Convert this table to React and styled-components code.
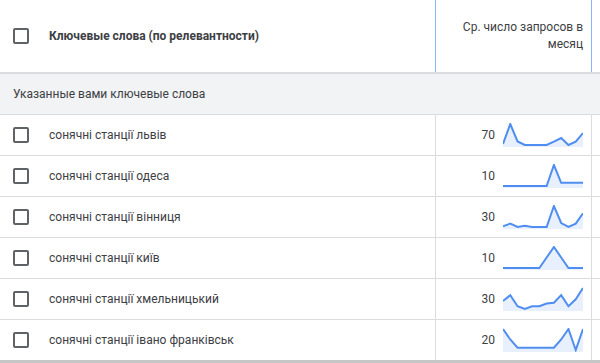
import React from "react";
import styled, { createGlobalStyle } from "styled-components";

const GlobalStyle = createGlobalStyle`
  html, body {
    margin: 0;
    padding: 0;
    background: #fff;
  }
  body {
    font-family: Roboto, "Noto Sans", Arial, sans-serif;
    color: #3c4043;
    -webkit-font-smoothing: antialiased;
  }
`;

const Table = styled.div`
  width: 600px;
  border-bottom: 3px solid #c6c6c6;
`;

const Row = styled.div`
  display: grid;
  grid-template-columns: 435px 156px 1fr;
  height: ${(p) => p.$height || 40}px;
  background: ${(p) => p.$bg || "#fff"};
  border-bottom: ${(p) => (p.$last ? "none" : `${p.$line || 1}px solid #dadce0`)};
`;

const Cell = styled.div`
  display: flex;
  align-items: center;
  border-left: ${(p) => (p.$divider ? `1px solid ${p.$divider}` : "none")};
  justify-content: ${(p) => (p.$end ? "flex-end" : "flex-start")};
  padding: ${(p) => p.$pad || "0"};
  gap: ${(p) => p.$gap || 0}px;
  min-width: 0;
`;

const Checkbox = styled.span`
  box-sizing: border-box;
  width: 16px;
  height: 16px;
  border: 2px solid #5f6368;
  border-radius: 2px;
  margin: 0 20px 0 13px;
  flex-shrink: 0;
`;

const HeadTitle = styled.span`
  font-size: 12px;
  font-weight: 700;
  color: #3c4043;
`;

const HeadMetric = styled.span`
  font-size: 12px;
  line-height: 17px;
  text-align: right;
  color: #3c4043;
`;

const GroupLabel = styled.span`
  font-size: 12px;
  padding-left: 13px;
  color: #3c4043;
`;

const Keyword = styled.span`
  font-size: 12px;
  color: #3c4043;
  white-space: nowrap;
`;

const Volume = styled.span`
  font-size: 12px;
  color: #3c4043;
`;

const Spark = styled.svg`
  display: block;
  width: 80px;
  height: 24px;
  flex-shrink: 0;
`;

const keywords = [
  { text: "сонячні станції львів", volume: 70, trend: [0.05, 1, 0.17, 0, 0, 0, 0, 0.16, 0.33, 0, 0.16, 0.57] },
  { text: "сонячні станції одеса", volume: 10, trend: [0, 0, 0, 0, 0, 0, 0, 1, 0.15, 0.15, 0.15, 0.15] },
  { text: "сонячні станції вінниця", volume: 30, trend: [0.03, 0.16, 0, 0.06, 0, 0, 0, 1, 0.19, 0, 0.16, 0.65] },
  { text: "сонячні станції київ", volume: 10, trend: [0, 0, 0, 0, 0, 0, 0.5, 1, 0.5, 0, 0, 0] },
  { text: "сонячні станції хмельницький", volume: 30, trend: [0.38, 0.66, 0.13, 0, 0.13, 0.13, 0.26, 0.3, 0.66, 0.13, 0.46, 1] },
  { text: "сонячні станції івано франківськ", volume: 20, trend: [1, 0.5, 0.11, 0.11, 0.11, 0.11, 0.11, 0.11, 0.5, 1, 0, 1] },
];

// 12-month trend line with a pale area under it
const Sparkline = ({ values }) => {
  const w = 80;
  const top = 1;
  const bottom = 22;
  const step = w / (values.length - 1);
  const pts = values.map((v, i) => [i * step, bottom - v * (bottom - top)]);
  const line = pts.map(([x, y]) => `${x.toFixed(2)},${y.toFixed(2)}`).join(" ");
  const area = `0,24 ${line} ${w},24`;
  return (
    <Spark viewBox="0 0 80 24">
      <polygon points={area} fill="#e8f0fe" />
      <polyline points={line} fill="none" stroke="#4f8ef0" strokeWidth="2" strokeLinejoin="miter" />
    </Spark>
  );
};

export default function App() {
  return (
    <>
      <GlobalStyle />
      <Table>
        <Row $height={72} $line={2}>
          <Cell>
            <Checkbox />
            <HeadTitle>Ключевые слова (по релевантности)</HeadTitle>
          </Cell>
          <Cell $divider="#8ab4f8" $end $pad="0 8px 0 0">
            <HeadMetric>
              Ср. число запросов в
              <br />
              месяц
            </HeadMetric>
          </Cell>
          <Cell $divider="#8ab4f8" />
        </Row>
        <Row $bg="#f1f3f4">
          <Cell>
            <GroupLabel>Указанные вами ключевые слова</GroupLabel>
          </Cell>
          <Cell />
          <Cell />
        </Row>
        {keywords.map((k, i) => (
          <Row key={k.text} $last={i === keywords.length - 1}>
            <Cell>
              <Checkbox />
              <Keyword>{k.text}</Keyword>
            </Cell>
            <Cell $divider="#dadce0" $end $pad="0 8px 0 0" $gap={8}>
              <Volume>{k.volume}</Volume>
              <Sparkline values={k.trend} />
            </Cell>
            <Cell $divider="#dadce0" />
          </Row>
        ))}
      </Table>
    </>
  );
}
